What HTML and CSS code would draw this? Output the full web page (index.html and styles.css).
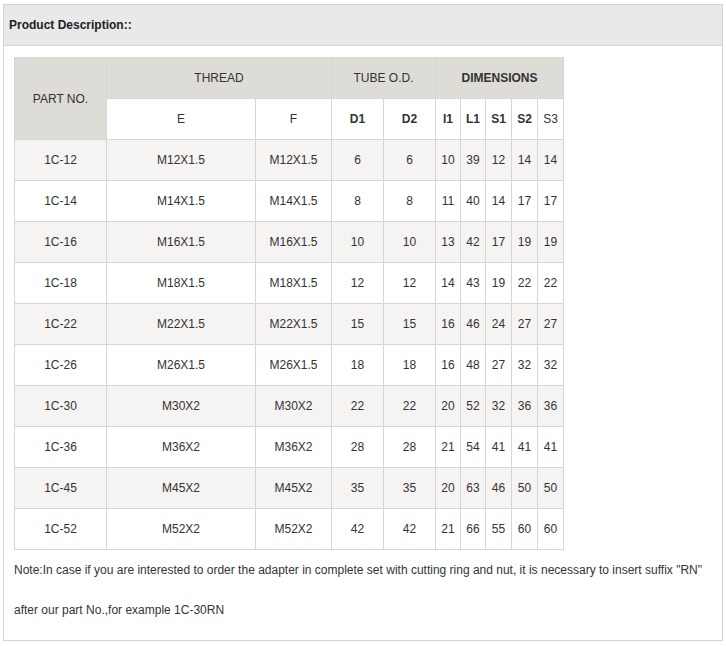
FILE: index.html
```html
<!DOCTYPE html>
<html>
<head>
<meta charset="utf-8">
<link rel="stylesheet" href="styles.css">
</head>
<body>
<div class="box">
  <div class="box-head">Product Description::</div>
  <div class="box-body">
    <table class="spec">
      <colgroup>
        <col class="c-part"><col class="c-e"><col class="c-f"><col class="c-d1"><col class="c-d2">
        <col class="c-i1"><col class="c-l1"><col class="c-s1"><col class="c-s2"><col class="c-s3">
      </colgroup>
      <thead>
        <tr class="h1">
          <th rowspan="2" class="part">PART NO.</th>
          <th colspan="2">THREAD</th>
          <th colspan="2">TUBE O.D.</th>
          <th colspan="5" class="b">DIMENSIONS</th>
        </tr>
        <tr class="h2">
          <th>E</th><th>F</th><th class="b">D1</th><th class="b">D2</th>
          <th class="b">I1</th><th class="b">L1</th><th class="b">S1</th><th class="b">S2</th><th>S3</th>
        </tr>
      </thead>
      <tbody>
        <tr class="alt"><td>1C-12</td><td>M12X1.5</td><td>M12X1.5</td><td>6</td><td>6</td><td>10</td><td>39</td><td>12</td><td>14</td><td>14</td></tr>
        <tr><td>1C-14</td><td>M14X1.5</td><td>M14X1.5</td><td>8</td><td>8</td><td>11</td><td>40</td><td>14</td><td>17</td><td>17</td></tr>
        <tr class="alt"><td>1C-16</td><td>M16X1.5</td><td>M16X1.5</td><td>10</td><td>10</td><td>13</td><td>42</td><td>17</td><td>19</td><td>19</td></tr>
        <tr><td>1C-18</td><td>M18X1.5</td><td>M18X1.5</td><td>12</td><td>12</td><td>14</td><td>43</td><td>19</td><td>22</td><td>22</td></tr>
        <tr class="alt"><td>1C-22</td><td>M22X1.5</td><td>M22X1.5</td><td>15</td><td>15</td><td>16</td><td>46</td><td>24</td><td>27</td><td>27</td></tr>
        <tr><td>1C-26</td><td>M26X1.5</td><td>M26X1.5</td><td>18</td><td>18</td><td>16</td><td>48</td><td>27</td><td>32</td><td>32</td></tr>
        <tr class="alt"><td>1C-30</td><td>M30X2</td><td>M30X2</td><td>22</td><td>22</td><td>20</td><td>52</td><td>32</td><td>36</td><td>36</td></tr>
        <tr><td>1C-36</td><td>M36X2</td><td>M36X2</td><td>28</td><td>28</td><td>21</td><td>54</td><td>41</td><td>41</td><td>41</td></tr>
        <tr class="alt"><td>1C-45</td><td>M45X2</td><td>M45X2</td><td>35</td><td>35</td><td>20</td><td>63</td><td>46</td><td>50</td><td>50</td></tr>
        <tr><td>1C-52</td><td>M52X2</td><td>M52X2</td><td>42</td><td>42</td><td>21</td><td>66</td><td>55</td><td>60</td><td>60</td></tr>
      </tbody>
    </table>
    <p class="note">Note:In case if you are interested to order the adapter in complete set with cutting ring and nut, it is necessary to insert suffix "RN"</p>
    <p class="note">after our part No.,for example 1C-30RN</p>
  </div>
</div>
</body>
</html>
```
FILE: styles.css
```css
html, body {
  margin: 0;
  padding: 0;
  background: #ffffff;
}
body {
  font-family: "Liberation Sans", Arial, sans-serif;
  font-size: 12px;
  color: #333333;
}
.box {
  margin: 4px 0 0 3px;
  width: 718px;
  height: 635px;
  border: 1px solid #d4d4d4;
}
.box-head {
  height: 40px;
  line-height: 40px;
  padding-left: 5px;
  background: #e9e9e9;
  border-bottom: 1px solid #d4d4d4;
  font-weight: bold;
  color: #222222;
}
.box-body {
  padding: 11px 10px 0 10px;
}
.spec {
  border-collapse: collapse;
  table-layout: fixed;
  width: 550px;
}
.c-part { width: 92px; }
.c-e { width: 149px; }
.c-f { width: 76px; }
.c-d1 { width: 52px; }
.c-d2 { width: 52px; }
.c-i1 { width: 25px; }
.c-l1 { width: 25px; }
.c-s1 { width: 26px; }
.c-s2 { width: 26px; }
.c-s3 { width: 26px; }
.spec th, .spec td {
  border: 1px solid #d6d6d6;
  height: 40px;
  padding: 0;
  text-align: center;
  font-weight: normal;
  color: #333333;
}
.spec .h1 th {
  background: #dedcd6;
}
.spec th.part {
  background: #dedcd6;
}
.spec .h2 th {
  background: #ffffff;
}
.spec th.b {
  font-weight: bold;
}
.spec tr.alt td {
  background: #f5f4f2;
}
.note {
  margin: 0;
  line-height: 39px;
  padding-top: 1px;
  white-space: nowrap;
}
```
